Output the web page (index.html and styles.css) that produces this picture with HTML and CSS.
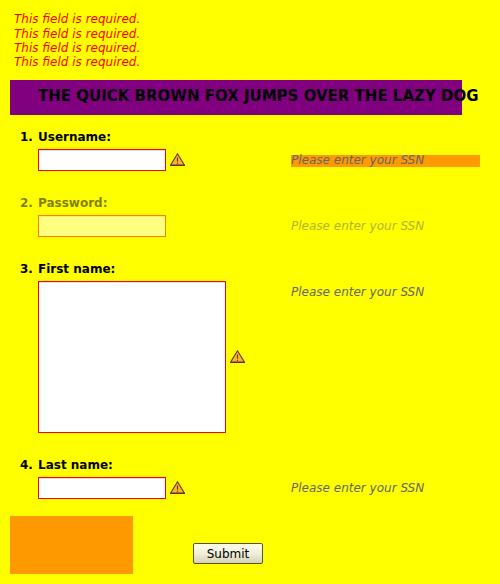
FILE: index.html
```html
<!DOCTYPE html>
<html lang="en">
<head>
<meta charset="utf-8">
<title>Form</title>
<link rel="stylesheet" href="styles.css">
</head>
<body>
<svg class="defs" aria-hidden="true">
  <symbol id="alert" viewBox="0 0 15 13">
    <path d="M7.5 .8 L14.3 12 H.7 Z" fill="#fdb52e" stroke="#5f3a20" stroke-width="1.1"/>
    <path d="M0 12.5H15" stroke="#5a2f1f"/>
    <path d="M7.5 4.5V8.7M7.5 9.8V11" stroke="#6b3d14" stroke-width="1.2"/>
  </symbol>
</svg>
<form>
  <ul class="errors">
    <li>This field is required.</li>
    <li>This field is required.</li>
    <li>This field is required.</li>
    <li>This field is required.</li>
  </ul>
  <h1>THE QUICK BROWN FOX JUMPS OVER THE LAZY DOG</h1>
  <ol class="fields">
    <li class="field">
      <span class="num">1.</span>
      <label for="user">Username:</label>
      <div class="control"><input id="user" type="text"><svg class="icon"><use href="#alert"/></svg></div>
      <p class="hint marked">Please enter your SSN</p>
    </li>
    <li class="field disabled">
      <span class="num">2.</span>
      <label for="pass">Password:</label>
      <div class="control"><input id="pass" type="password"></div>
      <p class="hint">Please enter your SSN</p>
    </li>
    <li class="field tall">
      <span class="num">3.</span>
      <label for="first">First name:</label>
      <div class="control"><textarea id="first"></textarea><svg class="icon"><use href="#alert"/></svg></div>
      <p class="hint">Please enter your SSN</p>
    </li>
    <li class="field">
      <span class="num">4.</span>
      <label for="last">Last name:</label>
      <div class="control"><input id="last" type="text"><svg class="icon"><use href="#alert"/></svg></div>
      <p class="hint">Please enter your SSN</p>
    </li>
  </ol>
  <div class="actions">
    <div class="block"></div>
    <button type="button">Submit</button>
  </div>
</form>
</body>
</html>
```
FILE: styles.css
```css
* { box-sizing: border-box; }
body {
  margin: 0;
  background: #ff0;
  color: #000;
  font: 12px/14.4px "DejaVu Sans", sans-serif;
}
.defs { display: none; }
form { padding: 12px 10px 0; }
ul, ol, p { margin: 0; padding: 0; list-style: none; }
.errors {
  height: 68px;
  padding-left: 4px;
  color: #f00;
  font-style: italic;
}
.errors li { line-height: 14px; }
.errors li:first-child { line-height: 15px; }
h1 {
  width: 452px;
  height: 35px;
  margin: 0 0 15px;
  padding-left: 28px;
  background: #800080;
  font-size: 15px;
  line-height: 32px;
  white-space: nowrap;
}
.field {
  display: grid;
  grid-template-columns: 18px 253px 189px;
  grid-template-rows: 19px 1fr;
  height: 66px;
  padding-left: 10px;
}
.tall { height: 196px; }
.num, label { font-weight: bold; }
.control {
  grid-column: 2;
  display: flex;
  align-items: center;
  align-self: start;
  gap: 4px;
}
input, textarea {
  display: block;
  width: 128px;
  height: 22px;
  margin: 0;
  padding: 1px;
  border: 1px solid #f00;
  border-radius: 0;
  background: #fff;
  box-shadow: inset 0 1px #ddd;
  outline: 0;
  resize: none;
}
textarea { width: 188px; height: 152px; }
.icon { width: 15px; height: 13px; margin-bottom: 1px; }
.hint {
  height: 12px;
  margin-top: 6px;
  color: #666;
  font-style: italic;
  line-height: 11px;
}
.marked { background: #f90; }
.disabled > * { opacity: .5; }
.actions {
  display: flex;
  gap: 60px;
  margin-top: -8px;
}
.block { width: 123px; height: 58px; background: #f90; }
button {
  width: 70px;
  height: 21px;
  margin: 27px 0 0;
  padding: 0;
  border: 1px solid #56531e;
  border-radius: 2px;
  background: linear-gradient(#fdfdec, #efefdc 50%, #d5d3b3);
  color: #000;
  font: 12px/18px "DejaVu Sans", sans-serif;
}
```
